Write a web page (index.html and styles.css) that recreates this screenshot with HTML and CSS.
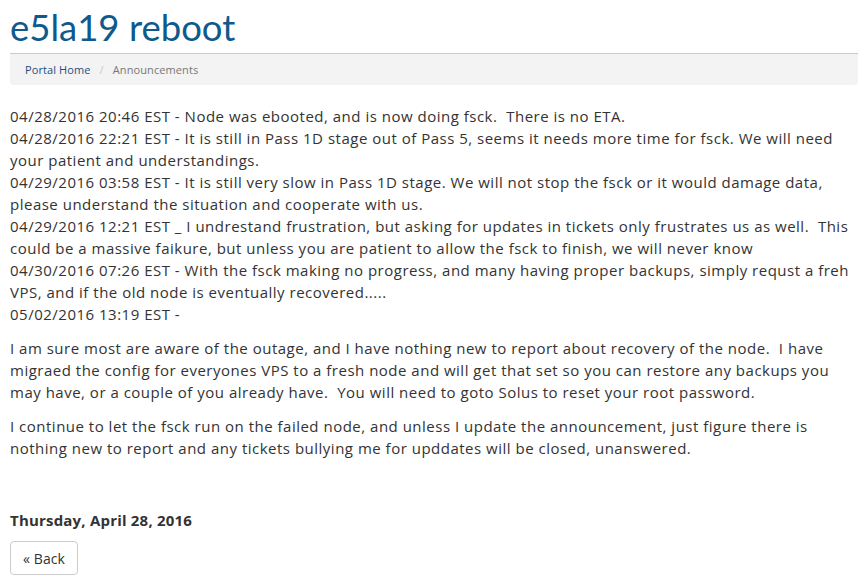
FILE: index.html
```html
<!DOCTYPE html>
<html>
<head>
<meta charset="utf-8">
<link rel="stylesheet" href="styles.css">
</head>
<body>
<div class="page">
  <div class="header">
    <h1 class="title">e5la19 reboot</h1>
  </div>
  <ol class="breadcrumb">
    <li><a href="#" class="crumb-link">Portal Home</a></li>
    <li class="sep">/</li>
    <li class="crumb-active">Announcements</li>
  </ol>
  <div class="content">
    <p class="log">04/28/2016 20:46 EST - Node was ebooted, and is now doing fsck.&nbsp; There is no ETA.<br>
04/28/2016 22:21 EST - It is still in Pass 1D stage out of Pass 5, seems it needs more time for fsck. We will need your patient and understandings.<br>
04/29/2016 03:58 EST - It is still very slow in Pass 1D stage. We will not stop the fsck or it would damage data, please understand the situation and cooperate with us.<br>
04/29/2016 12:21 EST _ I undrestand frustration, but asking for updates in tickets only frustrates us as well.&nbsp; This could be a massive faikure, but unless you are patient to allow the fsck to finish, we will never know<br>
04/30/2016 07:26 EST - With the fsck making no progress, and many having proper backups, simply requst a freh VPS, and if the old node is eventually recovered.....<br>
05/02/2016 13:19 EST -</p>
    <p>I am sure most are aware of the outage, and I have nothing new to report about recovery of the node.&nbsp; I have migraed the config for everyones VPS to a fresh node and will get that set so you can restore any backups you may have, or a couple of you already have.&nbsp; You will need to goto Solus to reset your root password.</p>
    <p>I continue to let the fsck run on the failed node, and unless I update the announcement, just figure there is nothing new to report and any tickets bullying me for upddates will be closed, unanswered.</p>
  </div>
  <div class="date">Thursday, April 28, 2016</div>
  <a href="#" class="btn">« Back</a>
</div>
</body>
</html>
```
FILE: styles.css
```css
html, body {
  margin: 0;
  padding: 0;
  background: #fff;
}
body {
  font-family: "Open Sans", "Liberation Sans", sans-serif;
  font-size: 15px;
  letter-spacing: 0.5px;
  line-height: 22px;
  color: #333;
}
.page {
  padding: 0 10px;
}
.header {
  border-bottom: 1px solid #ccc;
}
.title {
  margin: 0;
  padding: 6px 0 5px;
  font-family: "Lato", "Open Sans", sans-serif;
  font-weight: 400;
  font-size: 36.5px;
  letter-spacing: 0;
  line-height: 42px;
  color: #0e5a8c;
}
.breadcrumb {
  list-style: none;
  margin: 0;
  padding: 5px 15px;
  height: 21px;
  display: flex;
  gap: 9px;
  align-items: center;
  background: #f3f3f3;
  border-radius: 0 0 4px 4px;
  font-size: 11px;
  letter-spacing: 0.1px;
  line-height: 20px;
}
.crumb-link {
  color: #264f7e;
  text-decoration: none;
}
.sep {
  color: #ccc;
}
.crumb-active {
  color: #777;
}
.content {
  padding-top: 20px;
}
.content p {
  margin: 0 0 12px;
}
.date {
  margin-top: 50px;
  font-weight: 700;
  font-size: 15px;
  letter-spacing: 0.2px;
  line-height: 22px;
}
.btn {
  display: inline-block;
  margin-top: 10px;
  padding: 6px 12px 5px;
  border: 1px solid #ccc;
  border-radius: 4px;
  color: #333;
  text-decoration: none;
  font-size: 14px;
  letter-spacing: 0.1px;
  line-height: 21px;
}
```
